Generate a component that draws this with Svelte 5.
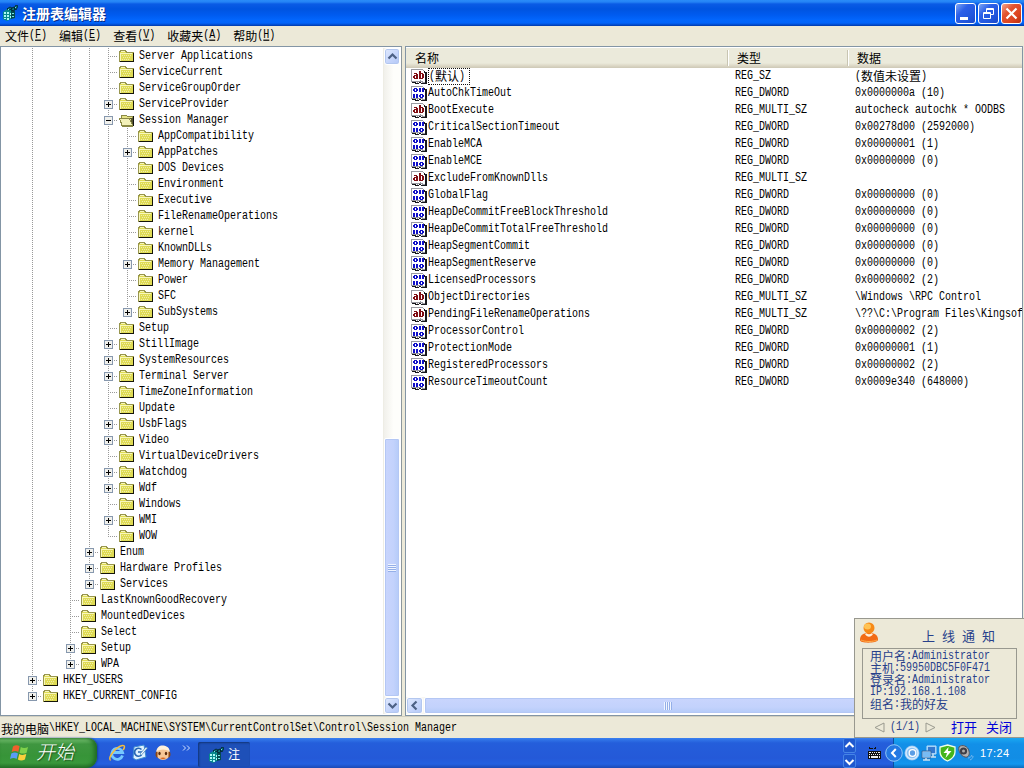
<script>
  const tree = [
    [4, 'Server Applications'], [4, 'ServiceCurrent'], [4, 'ServiceGroupOrder'],
    [4, 'ServiceProvider', '+'], [4, 'Session Manager', '-'],
    [5, 'AppCompatibility'], [5, 'AppPatches', '+'], [5, 'DOS Devices'], [5, 'Environment'],
    [5, 'Executive'], [5, 'FileRenameOperations'], [5, 'kernel'], [5, 'KnownDLLs'],
    [5, 'Memory Management', '+'], [5, 'Power'], [5, 'SFC'], [5, 'SubSystems', '+'],
    [4, 'Setup'], [4, 'StillImage', '+'], [4, 'SystemResources', '+'], [4, 'Terminal Server', '+'],
    [4, 'TimeZoneInformation'], [4, 'Update'], [4, 'UsbFlags', '+'], [4, 'Video', '+'],
    [4, 'VirtualDeviceDrivers'], [4, 'Watchdog', '+'], [4, 'Wdf', '+'], [4, 'Windows'],
    [4, 'WMI', '+'], [4, 'WOW'],
    [3, 'Enum', '+'], [3, 'Hardware Profiles', '+'], [3, 'Services', '+'],
    [2, 'LastKnownGoodRecovery'], [2, 'MountedDevices'], [2, 'Select'], [2, 'Setup', '+'], [2, 'WPA', '+'],
    [0, 'HKEY_USERS', '+'], [0, 'HKEY_CURRENT_CONFIG', '+']
  ];

  // A guide continues downward while a later sibling exists on that level.
  function continues(row, level) {
    for (let i = row + 1; i < tree.length; i++) {
      if (tree[i][0] === level) return true;
      if (tree[i][0] < level) return false;
    }
    return false;
  }
  const rows = tree.map(([level, name, box], i) => ({
    name, box,
    cells: Array.from({ length: level + 1 }, (_, l) => {
      const more = continues(i, l);
      return { end: l === level, kind: more ? 'full' : l === level ? 'half' : 'none' };
    })
  }));

  const values = [
    ['(默认)', 'REG_SZ', '(数值未设置)'],
    ['AutoChkTimeOut', 'REG_DWORD', '0x0000000a (10)'],
    ['BootExecute', 'REG_MULTI_SZ', 'autocheck autochk * OODBS'],
    ['CriticalSectionTimeout', 'REG_DWORD', '0x00278d00 (2592000)'],
    ['EnableMCA', 'REG_DWORD', '0x00000001 (1)'],
    ['EnableMCE', 'REG_DWORD', '0x00000000 (0)'],
    ['ExcludeFromKnownDlls', 'REG_MULTI_SZ', ''],
    ['GlobalFlag', 'REG_DWORD', '0x00000000 (0)'],
    ['HeapDeCommitFreeBlockThreshold', 'REG_DWORD', '0x00000000 (0)'],
    ['HeapDeCommitTotalFreeThreshold', 'REG_DWORD', '0x00000000 (0)'],
    ['HeapSegmentCommit', 'REG_DWORD', '0x00000000 (0)'],
    ['HeapSegmentReserve', 'REG_DWORD', '0x00000000 (0)'],
    ['LicensedProcessors', 'REG_DWORD', '0x00000002 (2)'],
    ['ObjectDirectories', 'REG_MULTI_SZ', '\\Windows \\RPC Control'],
    ['PendingFileRenameOperations', 'REG_MULTI_SZ', '\\??\\C:\\Program Files\\Kingsof'],
    ['ProcessorControl', 'REG_DWORD', '0x00000002 (2)'],
    ['ProtectionMode', 'REG_DWORD', '0x00000001 (1)'],
    ['RegisteredProcessors', 'REG_DWORD', '0x00000002 (2)'],
    ['ResourceTimeoutCount', 'REG_DWORD', '0x0009e340 (648000)']
  ];
  const menus = [['文件', 'F'], ['编辑', 'E'], ['查看', 'V'], ['收藏夹', 'A'], ['帮助', 'H']];
  const notice = ['用户名:Administrator', '主机:59950DBC5F0F471', '登录名:Administrator', 'IP:192.168.1.108', '组名:我的好友'];
  const path = '我的电脑\\HKEY_LOCAL_MACHINE\\SYSTEM\\CurrentControlSet\\Control\\Session Manager';

  const split = (s) => s.match(/[\u4e00-\u9fff]+|[^\u4e00-\u9fff]+/g) ?? [];
  const isCjk = (s) => /[\u4e00-\u9fff]/.test(s);
</script>

{#snippet tx(s)}<span class="tx">{#each split(s) as p}<span class={isCjk(p) ? 'cj' : 'la'}>{p}</span>{/each}</span>{/snippet}

{#snippet regIcon()}
  <svg class="reg" width="16" height="16" viewBox="0 0 16 16">
    <path d="M1 7 5 4l4 1v9l-4 2-4-2z" fill="#078a8c" />
    <path d="M2 7h2v2H2zm3 0h2v2H5zM2 10h2v2H2zm3 0h2v2H5zm3-2h2v2H8zm0 3h2v2H8zM2 13h2v1H2zm3 0h2v2H5z" fill="#a9f8f5" />
    <path d="M9 14V5l4 1v7z" fill="#034b50" />
    <path d="m5 4 3-2 2 1-2 2zM9 5l2-3 2 1-1 3zM12 3l2-3 2 1-2 4z" fill="#0b7478" stroke="#001d26" stroke-width=".8" />
    <path d="M10 8h2v1h-2zm0 3h2v1h-2zM6 4h1v1H6zM13 2h1v1h-1z" fill="#73e9e5" />
  </svg>
{/snippet}

{#snippet folder(open)}
  <svg class="folder" width="16" height="14" viewBox="0 0 16 14" shape-rendering="crispEdges">
    {#if open}
      <path d="M2 12V3l1-1h4l1 1h5v10H3z" fill="#e7e489" stroke="#8b8a45" />
      <path d="M14 3h1v10H4v-1h10z" fill="#111" />
      <path d="M.5 5.500h10l3 6.500H3z" fill="#f3f1b8" stroke="#8b8a45" />
      <path d="M11 5l3 7V5z" fill="#55542d" />
    {:else}
      <path d="M0.500 12V3L2 1.500h4L7.500 3H14v9z" fill="#dfdb55" stroke="#98964e" />
      <path d="M1 4h12v1H1zM1 4h1v8H1zM2 2h4v1H2z" fill="#f8f7bd" />
      <path d="M14 4h1v9H1v-1h13z" fill="#15150a" />
      <path d="M3 6h1v1H3zm2 0h1v1H5zm2 0h1v1H7zm2 0h1v1H9zm2 0h1v1h-1zM4 8h1v1H4zm2 0h1v1H6zm2 0h1v1H8zm2 0h1v1h-1zM3 10h1v1H3zm2 0h1v1H5zm2 0h1v1H7zm2 0h1v1H9z" fill="#f0eeaa" />
    {/if}
  </svg>
{/snippet}

{#snippet valueIcon(str)}
  <svg class="vicon" width="17" height="16" viewBox="0 0 17 16" shape-rendering="crispEdges">
    <path d="M.5.500h11l3 3V13h-3l-2-1-3 1-3-1h-3z" fill="#fff" stroke="#9a9ba2" />
    <path d="M13 2v2h1v10h-4l-1-1H8l-1 1H5l-1-1H1v1h2l2 1h2l2-1 1 1h6V3h-1z" fill="#17181c" />
    {#if str}
      <path d="M3 4h3v1h1v5H3V9H2V7h1V6h2V5H3zm1 3v2h1V7zM8 2h2v2h2v1h1v4h-1v1H8zm2 3v4h1V5z" fill="#800c12" />
    {:else}
      <path d="M3 2h3v1h1v2H6v1H3V5H2V3h1zm1 1v2h1V3zM8 2h2v4H8zM11 2h2v4h-2zM2 8h2v4H2zM5 8h2v4H5zM9 8h3v1h1v2h-1v1H9v-1H8V9h1zm1 1v2h1V9z" fill="#1010c8" />
    {/if}
  </svg>
{/snippet}

<div class="screen">
  <header class="title">
    {@render regIcon()}
    <h1>注册表编辑器</h1>
    <div class="wbtns">
      <button class="wb" aria-label="最小化"><svg width="19" height="19"><path d="M4 13h8v3H4z" fill="#fff" /></svg></button>
      <button class="wb" aria-label="还原"><svg width="19" height="19" fill="none" stroke="#fff"><path d="M7.500 8V4.500h7v6H12M7 5.500h8" /><path d="M4.500 8.500h7v6h-7zM4 9.500h8" /></svg></button>
      <button class="wb close" aria-label="关闭"><svg width="19" height="19"><path d="m4.500 4.500 10 10m0-10-10 10" stroke="#fff" stroke-width="2.200" /></svg></button>
    </div>
  </header>

  <nav class="menu">
    {#each menus as [label, key]}
      <span class="tx"><span class="cj">{label}</span><span class="la">(<u>{key}</u>)</span></span>
    {/each}
  </nav>

  <main>
    <section class="left">
      <div class="tree">
        {#each rows as r}
          <div class="trow">
            {#each r.cells as c}
              <span class="cell {c.kind}" class:end={c.end}>
                {#if c.end && r.box}
                  <svg class="box" width="9" height="9" shape-rendering="crispEdges">
                    <rect x=".5" y=".5" width="8" height="8" rx="1" fill="#f0f0ec" stroke="#8798ae" />
                    <path d={r.box === '+' ? 'M2 4h5v1H2zM4 2h1v5H4z' : 'M2 4h5v1H2z'} fill="#000" />
                  </svg>
                {/if}
              </span>
            {/each}
            {@render folder(r.box === '-')}
            {@render tx(r.name)}
          </div>
        {/each}
      </div>
      <div class="vscroll">
        <button class="sb" aria-label="向上"><svg width="15" height="15"><path d="m3.500 9.500 4-4 4 4" fill="none" stroke="#4d6185" stroke-width="2.200" /></svg></button>
        <div class="vtrack"></div>
        <div class="vthumb"><i></i></div>
        <button class="sb" aria-label="向下"><svg width="15" height="15"><path d="m3.500 5.500 4 4 4-4" fill="none" stroke="#4d6185" stroke-width="2.200" /></svg></button>
      </div>
    </section>
    <section class="right">
      <div class="cols head">
        <span>{@render tx('名称')}</span><span>{@render tx('类型')}</span><span>{@render tx('数据')}</span>
      </div>
      <div class="list">
        {#each values as [name, type, data], i}
          <div class="cols vrow">
            <span class="nm">{@render valueIcon(type !== 'REG_DWORD')}<span class="lbl" class:focus={i === 0}>{@render tx(name)}</span></span>
            <span>{@render tx(type)}</span>
            <span>{@render tx(data)}</span>
          </div>
        {/each}
      </div>
      <div class="hscroll">
        <button class="sb" aria-label="向左"><svg width="15" height="15"><path d="m9.500 3.500-4 4 4 4" fill="none" stroke="#4d6185" stroke-width="2.200" /></svg></button>
        <div class="hthumb"><i></i></div>
      </div>
    </section>
  </main>

  <div class="status">{@render tx(path)}</div>

  <footer class="taskbar">
    <button class="start">
      <svg width="20" height="20" viewBox="0 0 20 20">
        <path d="M3 3.500c2.500-1.600 4.600-1.400 6.600-.2L8.300 9C6.300 7.800 4 7.800 1.700 9z" fill="#f0602c" />
        <path d="M10.800 4c2 1.200 4.600 1.300 7.200 0l-1.400 5.700c-2.500 1.300-5 1.100-7.100 0z" fill="#7fd14b" />
        <path d="M1.300 10.400c2.400-1.300 4.600-1.200 6.700 0l-1.400 5.500c-2-1.100-4.200-1.100-6.600 0z" fill="#5a9cf5" />
        <path d="M9.200 11c2 1.200 4.500 1.200 7.100.1l-1.400 5.500c-2.500 1.200-5 1.200-7 0z" fill="#fbd03c" />
      </svg>
      <span>开始</span>
    </button>
    <div class="quick">
      <svg width="18" height="18" viewBox="0 0 18 18">
        <path d="M14.500 11.500A5.500 5.500 0 1 1 14.600 8.500H5" fill="none" stroke="#75c8ff" stroke-width="2.800" />
        <path d="M2.500 16.500C-1 14 8 2.500 14.500 1.500c3-.3 2 2.500.6 4.500" fill="none" stroke="#f6bd3c" stroke-width="1.500" />
      </svg>
      <svg width="18" height="18" viewBox="0 0 18 18">
        <path d="m3 3 10-2 2 12-10 3-3-2z" fill="#dff2ff" stroke="#3b8ad2" />
        <path d="M10.500 5.500a4 4 0 1 0 0 5.500M7 8h5" fill="none" stroke="#2867b4" stroke-width="1.700" />
        <path d="m9 10 6-7 1.500 1-6 7z" fill="#f7fafc" stroke="#417eb8" stroke-width=".7" />
      </svg>
      <svg width="18" height="18" viewBox="0 0 18 18">
        <circle cx="9" cy="9" r="7" fill="#f7c796" />
        <path d="M2.500 7C3 3 6 1 9.500 1.500 13 2 15.500 4 15.600 7 11 5 7 5 2.500 7z" fill="#fff1db" />
        <ellipse cx="5.500" cy="9.500" rx="1.200" ry="1.700" fill="#5b2a0c" /><ellipse cx="12" cy="9.500" rx="1.200" ry="1.700" fill="#5b2a0c" />
        <path d="M2 8c-1 2-.5 5 1.500 6V8zM16 8c1 2 .5 5-1.500 6V8z" fill="#8c4716" />
        <path d="M6 14c1.500 1.500 4.500 1.500 6 0-2-.7-4-.7-6 0z" fill="#d9641c" />
      </svg>
      <svg class="chev" width="9" height="7" fill="none" stroke="#d2e3ff"><path d="m1 .5 2.500 2.500L1 5.500M5 .5 7.500 3 5 5.500" /></svg>
    </div>
    <button class="task">{@render regIcon()}<span>注</span></button>
    <div class="updown">
      <span><svg width="11" height="13"><path d="m1.500 8 4-4 4 4" fill="none" stroke="#fff" stroke-width="2" /></svg></span>
      <span><svg width="11" height="13"><path d="m1.500 5 4 4 4-4" fill="none" stroke="#fff" stroke-width="2" /></svg></span>
    </div>
    <svg class="kbd" width="14" height="13" shape-rendering="crispEdges">
      <path d="M1 0h1v1h3v1H1zM7 0h1v2H6V1h1z" fill="#111" /><path d="M0 4h13v8H0z" fill="#101010" />
      <path d="M1 5h2v1H1zm3 0h1v1H4zm2 0h1v1H6zm2 0h1v1H8zm2 0h2v1h-2zM1 7h1v1H1zm2 0h1v1H3zm2 0h1v1H5zm2 0h1v1H7zm2 0h1v1H9zm2 0h1v1h-1zM1 9h1v2H1zm2 0h7v2H3zm8 0h1v2h-1z" fill="#eee" />
    </svg>
    <div class="tray">
      <svg class="hide" width="18" height="18"><circle cx="9" cy="9" r="8.300" fill="#2479e3" stroke="#8fc7f7" stroke-width="1" /><path d="M10.800 5 7 9l3.800 4" fill="none" stroke="#fff" stroke-width="2" /></svg>
      <svg width="18" height="18"><circle cx="9" cy="9" r="7.500" fill="#8cc0f1" /><circle cx="9" cy="9" r="6" fill="none" stroke="#d5eafd" stroke-width="1.500" /><circle cx="9.500" cy="9" r="3.300" fill="#5b9de5" stroke="#fff" stroke-width="1.300" /></svg>
      <svg width="17" height="18"><path d="M6 2h9v8H6z" fill="#91c8f5" stroke="#b8dcfb" /><path d="M7 3h7v6H7z" fill="#3478cf" /><path d="M1 7h9v7H1z" fill="#b9ddfb" stroke="#33679f" /><path d="M2 8h7v5H2z" fill="#79bbf3" /><path d="M12 10v3m-2 0h5M5 14v2m-3 0h7" stroke="#cddfee" stroke-width="1.500" /></svg>
      <svg width="19" height="18"><path d="M9.500 1 17 3v5c0 4-3 7-7.500 9C5 15 2 12 2 8V3z" fill="#43b51c" stroke="#efffe9" stroke-width="1.300" /><path d="m10.500 3-5 6H9l-1.500 5 6-7H10z" fill="#fff" /></svg>
      <svg width="18" height="18"><path d="M2 3c3-3 9-1 10 4 1 4-1 7-4 6C4 12 1 7 2 3z" fill="#b3b2b2" stroke="#53525a" /><circle cx="6.500" cy="7" r="3.600" fill="#3d3d45" /><circle cx="6.500" cy="7" r="1.500" fill="#aaa" /><path d="M11 14c2 0 3-1 4-3M13 16c2-1 3-2 3-4" fill="none" stroke="#7abaf1" /></svg>
      <time>17:24</time>
    </div>
  </footer>

  <aside class="popup">
    <div class="ptop">
      <svg width="20" height="22" viewBox="0 0 20 22">
        <path d="M1 18c0-5 3-6 6-7h6c3 1 6 2 6 7 0 3-18 4-18 0z" fill="#f26b16" />
        <circle cx="10" cy="6" r="5.500" fill="#f78a18" /><ellipse cx="8.500" cy="4.500" rx="3.500" ry="3" fill="#ffc355" />
        <path d="M6 12c2 3.500 6 3.500 8 0l-1.500-.8c-1.500 1.500-3.500 1.500-5 0z" fill="#fff0dc" /><path d="M2 18c4 2 12 2 16 0" stroke="#ffad4a" fill="none" />
      </svg>
      <h2>上线通知</h2>
    </div>
    <div class="pbody">
      {#each notice as line}<div>{@render tx(line)}</div>{/each}
    </div>
    <div class="pfoot">
      <svg width="11" height="11"><path d="M10 1v9L1 5.500z" fill="none" stroke="#99998f" /></svg>
      {@render tx('(1/1)')}
      <svg width="11" height="11"><path d="M1 1v9l9-4.500z" fill="none" stroke="#99998f" /></svg>
      <a href="#open">打开</a><a href="#close">关闭</a>
    </div>
  </aside>
</div>

<style>
  :global(body) { overflow: hidden; }
  * { box-sizing: border-box; }
  button { border: 0; padding: 0; margin: 0; font: inherit; }
  svg { display: block; flex: none; }
  .screen {
    position: relative; width: 1024px; height: 768px; overflow: hidden;
    display: flex; flex-direction: column; background: #ece9d8; color: #000;
    font: 12px/16px "Noto Sans CJK SC", sans-serif;
  }
  .tx { display: inline-flex; align-items: center; white-space: pre; line-height: 16px; height: 16px; }
  .cj { font-size: 12px; }
  .la { font: 10px/16px "Liberation Mono", monospace; transform: scaleY(1.2); }

  .title {
    height: 26px; flex: none; display: flex; align-items: center; padding: 0 2px; color: #fff;
    background: linear-gradient(#2a8cf8 0, #2483f5 2px, #0a5be5 4px, #0054e0 9px, #005bf0 15px, #0266fd 20px, #0264fa 23px, #0149c8 25px, #0138a8 26px);
  }
  h1 { font-size: 14px; line-height: 24px; font-weight: 700; margin: 0 0 0 4px; text-shadow: 1px 1px #0a2b83; flex: 1; }
  .wbtns { display: flex; gap: 2px; }
  .wb {
    width: 21px; height: 21px; border: 1px solid #fff; border-radius: 3px;
    background: linear-gradient(135deg, #7da6f5, #2c60e8 35%, #2257dd 70%, #1a48c9);
  }
  .close { background: linear-gradient(135deg, #f2a58d, #e35430 35%, #dc4421 70%, #b93010); }

  .menu { height: 20px; flex: none; display: flex; gap: 12px; padding: 2px 5px 0; }
  .menu .cj { padding-bottom: 1px; }
  .menu u { text-decoration: underline; text-underline-offset: 1px; }

  main { height: 670px; flex: none; display: flex; gap: 3px; padding-right: 1px; }
  .left { width: 402px; flex: none; display: flex; background: #fff; border: 1px solid #8395a5; border-right-color: #8c979c; padding: 1px 1px 1px 0; }
  .right { flex: 1; min-width: 0; background: #fff; border: 1px solid #8395a5; display: flex; flex-direction: column; padding: 1px 0; overflow: hidden; }
  .tree { flex: 1; padding-left: 22px; }
  .trow { display: flex; height: 16px; align-items: center; }
  .trow > .tx { padding-top: 1px; height: 17px; }
  .cell { width: 19px; height: 16px; flex: none; display: flex; align-items: center; padding-left: 5px; background-repeat: no-repeat; }
  .full { background-image: repeating-linear-gradient(#999 0 1px, transparent 1px 2px); background-size: 1px 16px; background-position: 9px 0; }
  .half { background-image: repeating-linear-gradient(#999 0 1px, transparent 1px 2px); background-size: 1px 8px; background-position: 9px 0; }
  .end { background-image: repeating-linear-gradient(#999 0 1px, transparent 1px 2px), repeating-linear-gradient(90deg, #999 0 1px, transparent 1px 2px); background-position: 9px 0, 9px 8px; }
  .end.full { background-size: 1px 16px, 10px 1px; }
  .end.half { background-size: 1px 8px, 10px 1px; }
  .folder { margin: 0 4px 0 1px; }

  .vscroll { width: 17px; display: flex; flex-direction: column; background: linear-gradient(90deg, #f1f0eb, #fefefb 60%); border-left: 1px solid #eeede5; }
  .sb { width: 16px; height: 17px; flex: none; border: 1px solid #fff; border-radius: 3px; box-shadow: inset 0 0 0 1px #b3c7ef; background: linear-gradient(135deg, #e1eafe, #c4d4fb 60%, #b4c8f6); }
  .vtrack { height: 373px; flex: none; }
  .vthumb { flex: 1; border: 1px solid #fff; border-radius: 2px; box-shadow: inset 0 0 0 1px #b4c7f4; background: linear-gradient(90deg, #c9d5fd, #c3d2fc 60%, #b4cbf8); display: grid; place-items: center; }
  .vthumb i { width: 8px; height: 8px; background: repeating-linear-gradient(#f0f5ff 0 1px, #94afe8 1px 2px); }

  .cols { display: grid; grid-template-columns: 321px 120px 1fr; align-items: center; flex: none; white-space: nowrap; }
  .head { height: 20px; grid-template-columns: 322px 120px 1fr; background: linear-gradient(#ebeadb 0 15px, #e0dccb 17px, #cdc8b5 20px); }
  .head > span { height: 16px; padding-left: 9px; border-right: 1px solid #c8c5b2; box-shadow: 1px 0 #fff; }
  .head > span:last-child { border: 0; box-shadow: none; }
  .list { flex: 1; }
  .vrow { height: 17px; }
  .vrow > span { padding-left: 8px; height: 17px; display: flex; align-items: center; }
  .vrow > .nm { padding-left: 5px; }
  .vrow .cj { padding-bottom: 2px; }
  .lbl { height: 17px; display: flex; align-items: center; }
  .focus { outline: 1px dotted #111; outline-offset: -1px; padding: 0 5px 0 1px; }
  .hscroll { height: 17px; flex: none; display: flex; gap: 1px; background: #f8f7f2; }
  .hscroll .sb { width: 17px; }
  .hthumb { width: 488px; border: 1px solid #fff; border-radius: 2px; box-shadow: inset 0 0 0 1px #b4c7f4; background: linear-gradient(#c9d5fd, #c3d2fc 60%, #b4cbf8); display: grid; place-items: center; }
  .hthumb i { width: 8px; height: 8px; background: repeating-linear-gradient(90deg, #f0f5ff 0 1px, #94afe8 1px 2px); }

  .status { height: 22px; flex: none; padding: 4px 1px 0; border-top: 1px solid #d2cfbf; }
  .status .tx { height: 16px; }

  .taskbar {
    height: 30px; flex: none; display: flex; color: #fff;
    background: linear-gradient(#3a80f0 0, #2f72e6 2px, #245edb 5px, #2459d8 20px, #2460e0 26px, #1c49b5 30px);
  }
  .start {
    width: 97px; display: flex; align-items: center; padding-left: 10px; gap: 6px; color: #fff;
    border-radius: 0 9px 11px 0; box-shadow: inset -3px 0 4px #1f6a22, 1px 0 2px #173f9f;
    background: linear-gradient(#57a857 0, #6cba68 2px, #3f9640 6px, #379438 18px, #3a983c 25px, #27742a 30px);
  }
  .start span { font-size: 19px; font-style: italic; font-weight: 300; line-height: 24px; padding-bottom: 4px; text-shadow: 1px 1px 1px #1c501c; }
  .quick { display: flex; align-items: center; width: 101px; padding-left: 11px; gap: 5px; }
  .chev { margin: 0 0 9px 5px; }
  .task {
    width: 52px; height: 25px; margin-top: 4px; display: flex; align-items: center; gap: 4px; padding-left: 10px; color: #fff;
    border-radius: 2px; background: #1e50b8; box-shadow: inset 1px 1px 2px #123476; font-size: 12px;
  }
  .task span { line-height: 16px; padding-bottom: 2px; }
  .updown { margin-left: 593px; width: 13px; display: flex; flex-direction: column; gap: 1px; }
  .updown span { height: 14.500px; background: #1f58cf; border: 1px solid #4584e6; border-radius: 2px; display: grid; place-items: center; overflow: hidden; }
  .kbd { margin: 9px 0 0 12px; }
  .tray {
    flex: 1; display: flex; align-items: center; margin-left: 11px; box-shadow: inset 1px 0 #0b4f9f;
    background: linear-gradient(#1ca6f0 0, #17a0ee 2px, #1290e8 6px, #128de5 20px, #1397ef 26px, #0d6dbb 30px);
  }
  .hide { margin-left: -8px; }
  time { font: 11px/16px "Liberation Sans", sans-serif; letter-spacing: .4px; margin-left: 5px; }

  .popup { position: absolute; left: 854px; top: 618px; width: 170px; height: 120px; border: 1px solid #98988f; border-width: 1px 0 1px 1px; background: #ece9d8; color: #27408b; }
  .ptop { height: 29px; display: flex; padding: 3px 0 0 4px; }
  h2 { font-size: 13px; font-weight: 400; line-height: 18px; letter-spacing: 7px; margin: 5px 0 0 43px; }
  .pbody { height: 71px; margin: 0 7px; border: 1px solid #98988f; padding: 2px 0 0 7px; }
  .pbody div { height: 12px; display: flex; align-items: center; }
  .pbody .tx, .pbody .cj, .pbody .la { height: 12px; line-height: 12px; }
  .pbody .cj { margin-top: -2px; }
  .pfoot { display: flex; align-items: center; height: 17px; padding-left: 19px; gap: 5px; }
  .pfoot a { color: #0000d8; text-decoration: none; font-size: 13px; margin: -1px 0 0 10px; }
  .pfoot a + a { margin-left: 4px; }
</style>
